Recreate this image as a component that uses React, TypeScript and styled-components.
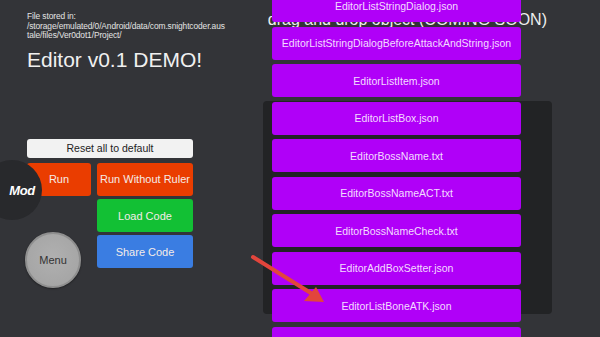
import React from "react";
import styled, { createGlobalStyle } from "styled-components";

const GlobalStyle = createGlobalStyle`
  html, body {
    margin: 0;
    padding: 0;
    background: #333438;
    font-family: "Liberation Sans", Arial, sans-serif;
  }
`;

const Page = styled.div`
  position: relative;
  width: 600px;
  height: 337px;
  overflow: hidden;
  display: flex;
  background: #333438;
`;

const LeftPane = styled.div`
  width: 263px;
  flex-shrink: 0;
  padding: 12px 0 0 27px;
  box-sizing: border-box;
  display: flex;
  flex-direction: column;
`;

const PathInfo = styled.div`
  width: 198px;
  font-size: 8.4px;
  letter-spacing: -0.1px;
  line-height: 9.6px;
  color: #e4e4e4;
  word-break: break-all;
`;

const Title = styled.h1`
  margin: 7px 0 0;
  font-size: 21px;
  font-weight: normal;
  line-height: 24px;
  color: #f0f0f0;
`;

const Controls = styled.div`
  margin-top: 67px;
  width: 166px;
  display: flex;
  flex-direction: column;
  gap: 5px;
`;

const ResetButton = styled.button`
  height: 19px;
  border: none;
  border-radius: 3px;
  background: #f2f2f2;
  color: #222;
  font-family: inherit;
  font-size: 10.5px;
  padding: 0;
`;

const ButtonArea = styled.div`
  display: flex;
  gap: 6px;
`;

const SubColumn = styled.div<{ $width: number }>`
  width: ${p => p.$width}px;
  display: flex;
  flex-direction: column;
  gap: 3.3px;
`;

const ActionButton = styled.button<{ $bg: string }>`
  height: 33px;
  border: none;
  border-radius: 3px;
  background: ${p => p.$bg};
  color: #f4ece8;
  font-family: inherit;
  font-size: 11px;
  padding: 0;
`;

const MenuButton = styled.button`
  margin: 33px 0 0 -2px;
  width: 56px;
  height: 56px;
  border-radius: 50%;
  border: 2px solid #8f8f8f;
  background: radial-gradient(circle at 50% 45%, #b0b0b0 0%, #a6a6a6 70%, #9a9a9a 100%);
  box-shadow: 0 1px 2px rgba(0, 0, 0, 0.4);
  color: #333;
  font-family: inherit;
  font-size: 11px;
  padding: 0;
`;

const RightPane = styled.div`
  width: 289px;
  flex-shrink: 0;
  display: grid;
  align-items: start;
`;

const Layer = styled.div`
  grid-area: 1 / 1;
`;

const DropTitle = styled(Layer)`
  margin: 11px 0 0 -26px;
  width: 310px;
  text-align: right;
  font-size: 16px;
  line-height: 18px;
  color: #eeeeee;
  white-space: nowrap;
`;

const DarkPanel = styled(Layer)`
  margin-top: 101px;
  height: 213px;
  background: #222325;
  border-radius: 4px;
`;

const FileList = styled(Layer)`
  margin: -11px 0 0 9px;
  width: 249px;
  display: flex;
  flex-direction: column;
  gap: 4.5px;
`;

const FileButton = styled.button`
  height: 33px;
  border: none;
  border-radius: 3px;
  background: #b000f8;
  color: #f3dcff;
  font-family: inherit;
  font-size: 10.5px;
  padding: 0;
`;

const ModBadge = styled.div`
  position: absolute;
  left: -18px;
  top: 160px;
  width: 60px;
  height: 60px;
  border-radius: 50%;
  background: #28292c;
  display: flex;
  align-items: center;
  justify-content: flex-end;
  padding-right: 7px;
  box-sizing: border-box;
  color: #ffffff;
  font-size: 13px;
  font-weight: bold;
  font-style: italic;
  letter-spacing: -0.3px;
`;

const Arrow = styled.svg`
  position: absolute;
  left: 248px;
  top: 252px;
`;

const files = [
  "EditorListStringDialog.json",
  "EditorListStringDialogBeforeAttackAndString.json",
  "EditorListItem.json",
  "EditorListBox.json",
  "EditorBossName.txt",
  "EditorBossNameACT.txt",
  "EditorBossNameCheck.txt",
  "EditorAddBoxSetter.json",
  "EditorListBoneATK.json",
  "EditorListBoneATKPattern.json"
];

const App: React.FC = () => {
  return (
    <Page>
      <GlobalStyle />
      <LeftPane>
        <PathInfo>
          File stored in:
          <br />
          /storage/emulated/0/Android/data/com.snightcoder.austale/files/Ver0dot1/Project/
        </PathInfo>
        <Title>Editor v0.1 DEMO!</Title>
        <Controls>
          <ResetButton>Reset all to default</ResetButton>
          <ButtonArea>
            <SubColumn $width={64}>
              <ActionButton $bg="#ea3d00">Run</ActionButton>
              <MenuButton>Menu</MenuButton>
            </SubColumn>
            <SubColumn $width={96}>
              <ActionButton $bg="#ea3d00">Run Without Ruler</ActionButton>
              <ActionButton $bg="#12c034">Load Code</ActionButton>
              <ActionButton $bg="#3a7de2">Share Code</ActionButton>
            </SubColumn>
          </ButtonArea>
        </Controls>
      </LeftPane>
      <RightPane>
        <DropTitle>drag and drop object (COMING SOON)</DropTitle>
        <DarkPanel />
        <FileList>
          {files.map(f => (
            <FileButton key={f}>{f}</FileButton>
          ))}
        </FileList>
      </RightPane>
      <ModBadge>Mod</ModBadge>
      <Arrow width="80" height="56" viewBox="0 0 80 56">
        <line x1="5" y1="5" x2="66" y2="43" stroke="#e2453c" strokeWidth="4" strokeLinecap="round" />
        <polygon points="76,50 56,49 68,35" fill="#e2453c" />
      </Arrow>
    </Page>
  );
};

export default App;
